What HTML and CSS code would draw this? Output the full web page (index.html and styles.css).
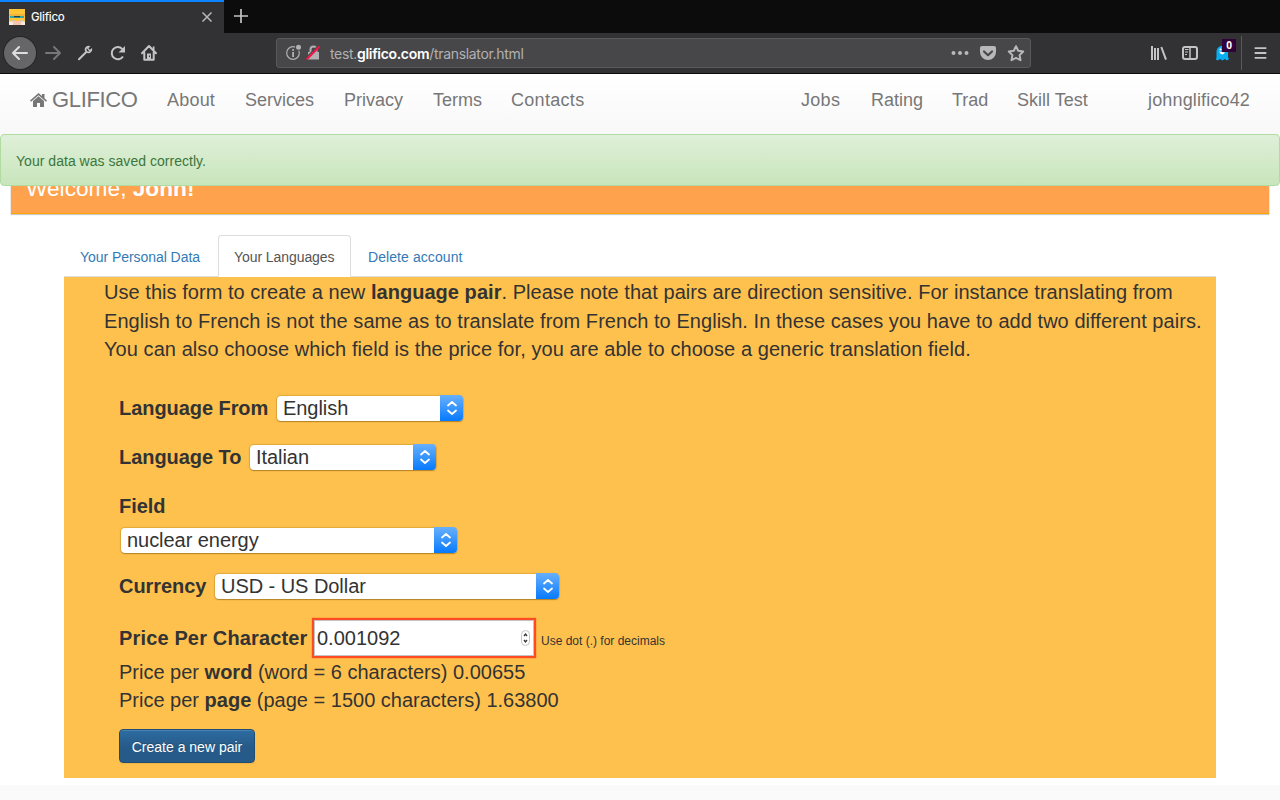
FILE: index.html
```html
<!DOCTYPE html>
<html lang="en">
<head>
<meta charset="utf-8">
<title>Glifico</title>
<link rel="stylesheet" href="styles.css">
</head>
<body>
<div class="browser">
  <div class="tabstrip">
    <div class="tab">
      <svg class="favicon" width="16" height="16" viewBox="0 0 16 16"><path fill="#ffc536" d="M0 0h16v16H0z"/><path fill="#e0a040" d="M0 5.500h16v1H0z"/><path fill="#35a6a0" d="M1 7h14v2H1z"/><path fill="#253d40" d="M5 7h6v1.200H5z"/><path fill="#d5c6a8" d="M2 11h4v2H2zM10 11h4v2h-4z"/><path fill="#f4c4ae" d="M4 12h8v4H4z"/><path fill="#f4eadf" d="M0 12.500h4V16H0zM12 12.500h4V16h-4z"/></svg>
      <span class="tab-title">Glifico</span>
      <svg class="tab-close" width="10" height="10" viewBox="0 0 10 10"><path d="M.5.5l9 9M9.500.5l-9 9" fill="none" stroke="#b8b8ba" stroke-width="1.500"/></svg>
    </div>
    <svg class="new-tab" width="14" height="14" viewBox="0 0 14 14"><path d="M7 0v14M0 7h14" stroke="#c4c4c4" stroke-width="1.700"/></svg>
  </div>
  <div class="toolbar">
    <span class="back"><svg width="32" height="32" viewBox="0 0 32 32"><path d="M23 16H9M15 10l-6 6 6 6" fill="none" stroke="#dededf" stroke-width="2" stroke-linecap="round" stroke-linejoin="round"/></svg></span>
    <svg class="tool" width="32" height="32" viewBox="0 0 32 32"><path d="M10 16h14M18 10l6 6-6 6" fill="none" stroke="#777779" stroke-width="2" stroke-linecap="round" stroke-linejoin="round"/></svg>
    <svg class="tool" width="32" height="32" viewBox="0 0 32 32"><path d="M11 22.300l7-7" stroke="#c4c4c5" stroke-width="2" stroke-linecap="round"/><path d="M21.500 9.800a2.900 2.900 0 0 0-3 4.800M18.500 14.600a3 3 0 0 0 4.900-2.700M21.500 9.800L20 11.500l1.500 1.700 1.900-1.300" fill="none" stroke="#c4c4c5" stroke-width="1.700" stroke-linecap="round" stroke-linejoin="round"/><path d="M21.800 9.500l-1.300 2 1.200 1.300 2-1.300z" fill="#323234"/></svg>
    <svg class="tool" width="32" height="32" viewBox="0 0 32 32"><path d="M23 19.500a6.100 6.100 0 1 1-.8-7.600l1 1.100" fill="none" stroke="#c4c4c5" stroke-width="2"/><path d="M25 9v6.500h-6.500z" fill="#c4c4c5"/></svg>
    <svg class="tool" width="32" height="32" viewBox="0 0 32 32"><path d="M10 16.300L17 9l7 7.300M12.300 15.500v7.200h9.400v-7.200" fill="none" stroke="#c4c4c5" stroke-width="2" stroke-linecap="round" stroke-linejoin="round"/><path d="M20.700 9.500h1.800v3.500h-1.800zM15 16.500h4V22h-4z" fill="#c4c4c5"/><path d="M17 18.500h1v1.500h-1z" fill="#323234"/></svg>
    <div class="urlbar">
      <svg width="46" height="20" viewBox="0 0 46 20"><circle cx="11" cy="10" r="6.300" fill="none" stroke="#b1b1b3" stroke-width="1.200"/><path d="M10.200 9h1.800v5h-1.800zM10.200 6h1.800v1.800h-1.800z" fill="#b1b1b3"/><circle cx="16.500" cy="4.300" r="3.500" fill="#474749"/><circle cx="16.500" cy="4.300" r="2.500" fill="#b1b1b3"/><path d="M26 9h11v7.500H26z" fill="#b1b1b3"/><path d="M28.500 9V6.500a3 3 0 0 1 6 0V9" fill="none" stroke="#b1b1b3" stroke-width="2"/><path d="M24 15L36 3" stroke="#474749" stroke-width="1.500"/><path d="M24.500 16.500L37.500 3.500" stroke="#ee1747" stroke-width="2.200"/></svg>
      <span class="url">test.<b>glifico.com</b>/translator.html</span>
      <svg class="url-actions" width="84" height="24" viewBox="0 0 84 24"><g fill="#b8b8ba"><circle cx="7.500" cy="12" r="2"/><circle cx="14" cy="12" r="2"/><circle cx="20.500" cy="12" r="2"/><path d="M36 5h12q2 0 2 2v4a8 8 0 0 1-16 0V7q0-2 2-2z"/></g><path d="M38 10.500l4 3.700 4-3.700" fill="none" stroke="#474749" stroke-width="2.200" stroke-linecap="round" stroke-linejoin="round"/><path d="M70 5.200l2.200 4.600 5 .7-3.600 3.600.9 5.100-4.500-2.400-4.500 2.400.9-5.100-3.600-3.600 5-.7z" fill="none" stroke="#b8b8ba" stroke-width="2" stroke-linejoin="round"/></svg>
    </div>
    <div class="extensions">
      <svg width="32" height="32" viewBox="0 0 32 32"><path d="M10 9v14M13 11v12M16 11v12M19.300 10L24 22.700" stroke="#c4c4c5" stroke-width="2"/></svg>
      <svg width="32" height="32" viewBox="0 0 32 32"><rect x="9" y="10" width="14" height="12" rx="2" fill="none" stroke="#c4c4c5" stroke-width="2"/><path d="M16 10v12" stroke="#c4c4c5" stroke-width="1.500"/><path d="M11 12.500h3.500M11 15h3M11 17.500h2" stroke="#c4c4c5"/></svg>
      <span class="ghost"><svg width="32" height="32" viewBox="0 0 32 32"><path d="M10.500 20v-5.500a5.500 5.500 0 0 1 11.500 0V20l1 2-2 1.500-2.300-1.500-2.200 1.500-2.300-1.500-2.700 1.500-1.500-1z" fill="#08aef2"/><path d="M13 14.500q3 5.500 6 1z" fill="#fff"/><circle cx="14.500" cy="12.500" r="1" fill="#fff"/></svg><span class="badge">0</span></span>
      <svg class="menu" width="38" height="34" viewBox="0 0 38 34"><path d="M13 12h12M13 17h12M13 22h12" stroke="#c4c4c5" stroke-width="2"/></svg>
    </div>
  </div>
</div>

<nav class="navbar">
  <span class="brand"><svg width="17" height="14" viewBox="0 0 17 14"><path d="M0 7.500L8.500 0 12 3V1h2.500v4.200L17 7.500l-1 1.200-7.500-6.500L1 8.700z" fill="#777"/><path d="M8.500 3.300L14 8v6h-4v-4H7v4H3V8z" fill="#777"/></svg><span class="brand-name">GLIFICO</span></span>
  <span class="n-about">About</span><span class="n-services">Services</span><span class="n-privacy">Privacy</span><span class="n-terms">Terms</span><span class="n-contacts">Contacts</span>
  <span class="n-jobs">Jobs</span><span class="n-rating">Rating</span><span class="n-trad">Trad</span><span class="n-skill">Skill Test</span><span class="n-user">johnglifico42</span>
</nav>
<div class="alert">Your data was saved correctly.</div>
<header class="welcome"><span>Welcome, <b>John!</b></span></header>

<main class="content">
  <div class="tabs">
    <a class="t-personal">Your Personal Data</a><a class="active">Your Languages</a><a class="t-delete">Delete account</a>
  </div>
  <section class="panel">
    <p class="intro"><span class="l1">Use this form to create a new <b>language pair</b>. Please note that pairs are direction sensitive. For instance translating from</span><br><span class="l2">English to French is not the same as to translate from French to English. In these cases you have to add two different pairs.</span><br><span class="l3">You can also choose which field is the price for, you are able to choose a generic translation field.</span></p>
    <div class="form">
      <div class="row r-from"><label>Language From</label><div class="select s-lang"><span>English</span><i><svg width="12" height="16" viewBox="0 0 12 16"><path d="M2 5.500L6 2l4 3.500M2 10.500L6 14l4-3.500"/></svg></i></div></div>
      <div class="row r-to"><label>Language To</label><div class="select s-lang"><span>Italian</span><i><svg width="12" height="16" viewBox="0 0 12 16"><path d="M2 5.500L6 2l4 3.500M2 10.500L6 14l4-3.500"/></svg></i></div></div>
      <div class="row r-field"><label>Field</label></div>
      <div class="row r-fieldsel"><div class="select s-field"><span>nuclear energy</span><i><svg width="12" height="16" viewBox="0 0 12 16"><path d="M2 5.500L6 2l4 3.500M2 10.500L6 14l4-3.500"/></svg></i></div></div>
      <div class="row r-cur"><label>Currency</label><div class="select s-cur"><span>USD - US Dollar</span><i><svg width="12" height="16" viewBox="0 0 12 16"><path d="M2 5.500L6 2l4 3.500M2 10.500L6 14l4-3.500"/></svg></i></div></div>
      <div class="row r-price"><label>Price Per Character</label><div class="number"><span>0.001092</span><svg width="9" height="16" viewBox="0 0 9 16"><rect x=".5" y=".5" width="8" height="15" rx="4" fill="#fff" stroke="#c4c4c4"/><path d="M3 6l1.500-2L6 6M3 10l1.500 2L6 10" fill="none" stroke="#333" stroke-width="1.300"/></svg></div><small>Use dot (.) for decimals</small></div>
      <div class="calc c1"><span>Price per <b>word</b> (word = 6 characters) 0.00655</span></div>
      <div class="calc c2"><span>Price per <b>page</b> (page = 1500 characters) 1.63800</span></div>
      <button class="create">Create a new pair</button>
    </div>
  </section>
</main>
<footer class="footer"></footer>
</body>
</html>
```
FILE: styles.css
```css
* { box-sizing: border-box; }
body { margin: 0; width: 1280px; height: 800px; overflow: hidden; display: flex; flex-direction: column; position: relative; background: #fff; color: #333; font: 14px/20px "Liberation Sans", Arial, sans-serif; }
svg { display: block; flex: none; }
span, label, a, small { white-space: nowrap; }

.browser { flex: none; height: 74px; background: #323234; border-bottom: 1px solid #0c0c0d; font-family: Inter, sans-serif; }
.tabstrip { height: 33px; display: flex; align-items: center; background: #0c0c0d; }
.tab { width: 224px; height: 33px; display: flex; align-items: center; padding: 0 12px 0 9px; background: #323234; border-top: 2px solid #0a84ff; color: #f9f9fa; }
.tab-title { margin: -1px 0 0 6px; font-size: 11.5px; font-weight: 500; letter-spacing: -.25px; }
.favicon { margin-top: -1px; }
.tab-close { margin: -1px 0 0 auto; }
.new-tab { margin: -1px 0 0 10px; }
.toolbar { height: 40px; display: flex; align-items: center; padding-left: 4px; }
.back { border-radius: 50%; background: #666668; box-shadow: 0 0 0 1px #252526; }
.urlbar { width: 755px; height: 30px; margin-left: 112px; display: flex; align-items: center; border: 1px solid #59595b; border-radius: 3px; background: #474749; padding: 0 0 0 5px; }
.url { margin: 2px 0 0 2px; font-size: 14px; color: #b1b1b3; letter-spacing: -.32px; }
.url b { font-weight: 600; color: #fff; }
.url-actions { margin-left: auto; }
.extensions { display: flex; align-items: center; margin-left: 111px; }
.ghost { position: relative; }
.badge { position: absolute; left: 16px; top: 2px; width: 14px; height: 13px; background: #32003b; color: #fff; font: bold 10px/13px "Open Sans", sans-serif; text-align: center; }
.menu { border-left: 1px solid #5b5b5d; margin-left: 3px; }

.navbar { flex: none; height: 61px; padding: 16px 0 0 30px; display: flex; background: linear-gradient(#fff, #f8f8f8); color: #777; font-size: 18px; }
.brand { width: 137px; display: flex; align-items: center; height: 20px; }
.brand-name { margin-left: 5px; font-size: 22px; letter-spacing: -.35px; }
.n-about { width: 78px; letter-spacing: .2px; }
.n-services { width: 99px; }
.n-privacy { width: 89px; }
.n-terms { width: 78px; }
.n-contacts { width: 290px; letter-spacing: .3px; }
.n-jobs { width: 70px; letter-spacing: .3px; }
.n-rating { width: 81px; }
.n-trad { width: 65px; }
.n-skill { width: 131px; }
.n-user { letter-spacing: .15px; }

.alert { position: absolute; left: 0; top: 134px; width: 1280px; height: 52px; padding: 16px 15px; border: 1px solid #b2dba1; border-radius: 4px; background: linear-gradient(#dff0d8, #c8e5bc); color: #3c763d; letter-spacing: .03px; }
.welcome { flex: none; height: 79px; margin: 0 11px; padding: 39px 15px 0; background: #ffa24e; border-bottom: 1px solid orange; box-shadow: 0 1px 1px rgba(0,0,0,.16), 0 0 0 1px rgba(0,0,0,.06); color: #fff; font-size: 22.700px; line-height: 28px; }

.content { flex: none; width: 1152px; margin: 21px 64px 0; }
.tabs { height: 42px; display: flex; border-bottom: 1px solid #ddd; }
.tabs a { height: 42px; padding: 11px 16px; color: #337ab7; border: 1px solid transparent; }
.tabs .t-personal { width: 154px; padding-left: 15px; letter-spacing: -.05px; }
.tabs .active { width: 133px; padding-left: 15px; color: #555; background: #fff; border-color: #ddd #ddd transparent; border-radius: 4px 4px 0 0; letter-spacing: -.07px; }
.tabs .t-delete { letter-spacing: .08px; }
.panel { height: 501px; background: #ffc14d; padding: 1px 0 0 40px; font-size: 20px; line-height: 28.500px; }
.intro { margin: 0; }
.l1 { letter-spacing: .041px; }
.l2 { letter-spacing: .05px; }
.l3 { letter-spacing: .069px; }
.form { padding: 31px 0 0 15px; }
.row { height: 28px; display: flex; align-items: center; }
.row label { font-weight: bold; letter-spacing: -.06px; }
.r-to, .r-field { margin-top: 21px; }
.r-fieldsel { margin-top: 6px; padding-left: 2px; }
.r-cur { margin-top: 18px; }
.r-price { height: 40px; margin-top: 17px; }
.r-from label { width: 158px; }
.r-to label { width: 131px; }
.r-cur label { width: 96px; }
.r-price label { width: 193px; padding-top: 1px; letter-spacing: .15px; }
.select { height: 25px; display: flex; align-items: center; justify-content: space-between; margin-top: -1px; padding-left: 6px; background: #fff; border-radius: 4px; box-shadow: 0 0 1px 1px rgba(120,80,0,.22), 0 1px 1px rgba(90,60,0,.35); }
.select span { padding-top: 1px; letter-spacing: -.05px; }
.select i { width: 23px; height: 26px; display: flex; align-items: center; justify-content: center; border-radius: 0 4px 4px 0; background: linear-gradient(#68b0fb, #077aff); }
.select path { fill: none; stroke: #fff; stroke-width: 1.800; stroke-linecap: round; stroke-linejoin: round; }
.s-lang { width: 186px; }
.s-field { width: 336px; }
.s-cur { width: 344px; }
.number { width: 224px; height: 40px; padding: 0 6px 0 4px; display: flex; align-items: center; justify-content: space-between; border: 2px solid #ff4b22; background: #fff; box-shadow: inset 0 0 0 1px #c4c4c4, 0 0 1px #ff4b22; }
.number span { margin-left: -1px; padding-top: 1px; }
.number svg { margin-right: -2px; }
.r-price small { margin: 6px 0 0 5px; font-size: 12px; line-height: 20px; }
.calc { height: 28px; line-height: 28px; }
.create { display: block; height: 34px; width: 136px; margin-top: 15px; padding: 2px 0 0; border: 1px solid #204d74; border-radius: 4px; background: linear-gradient(#2d6ca2, #265a88 55%); box-shadow: inset 0 1px 0 rgba(255,255,255,.15), 0 1px 1px rgba(0,0,0,.075); color: #fff; font: 14px/20px "Liberation Sans", Arial, sans-serif; text-shadow: 0 -1px 0 rgba(0,0,0,.2); }
.footer { flex: none; margin-top: 7px; height: 20px; background: #fafafa; }
```
